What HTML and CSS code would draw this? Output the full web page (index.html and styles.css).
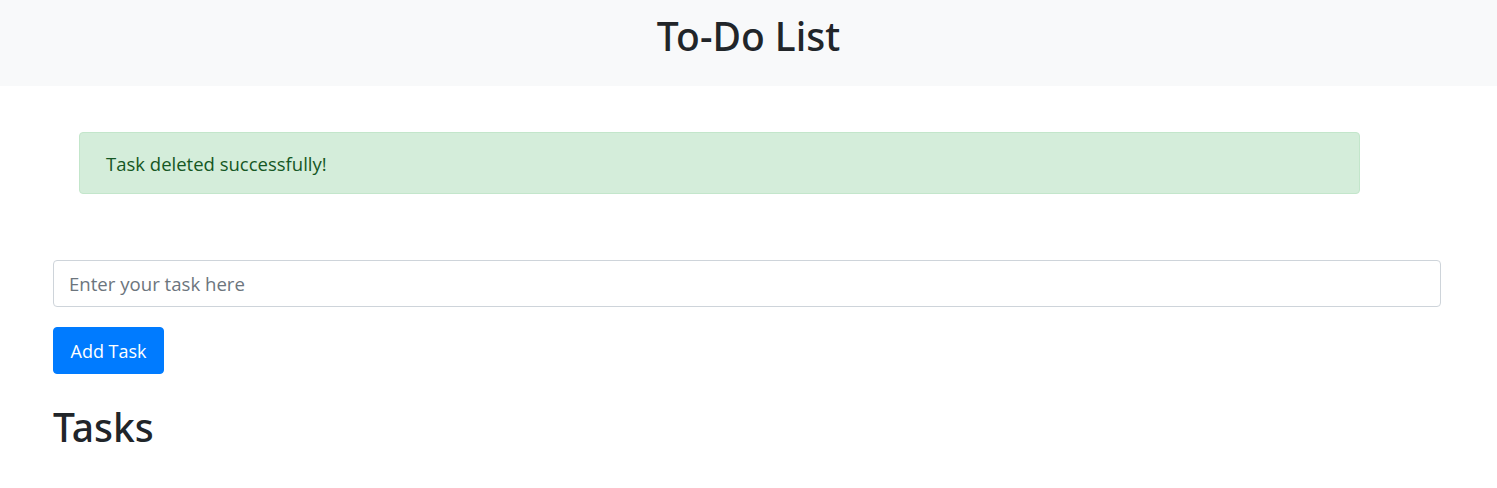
FILE: index.html
```html
<!DOCTYPE html>
<html lang="en">
<head>
<meta charset="utf-8">
<title>To-Do List</title>
<link rel="stylesheet" href="styles.css">
</head>
<body>
<header class="header">
  <h1 class="title">To-Do List</h1>
</header>
<main class="content">
  <div class="alert">Task deleted successfully!</div>
  <form class="task-form">
    <input class="task-input" type="text" placeholder="Enter your task here">
    <button class="btn-add" type="button">Add Task</button>
  </form>
  <h2 class="section-title">Tasks</h2>
</main>
</body>
</html>
```
FILE: styles.css
```css
* { box-sizing: border-box; }
body {
  margin: 0;
  font-family: "Open Sans", "Noto Sans", sans-serif;
  color: #212529;
  background: #fff;
}
.header {
  background: #f8f9fa;
  height: 86px;
  display: flex;
  align-items: center;
  justify-content: center;
  padding-bottom: 14px;
}
.title {
  margin: 0;
  font-family: "Noto Sans", "Open Sans", sans-serif;
  font-size: 39px;
  font-weight: 500;
  line-height: 1.2;
}
.content {
  padding: 46px 56px 0 53px;
}
.alert {
  margin: 0 81px 0 26px;
  height: 62px;
  display: flex;
  align-items: center;
  padding: 0 26px;
  background: #d4edda;
  border: 1px solid #c3e6cb;
  border-radius: 4px;
  color: #155724;
  font-size: 18.5px;
}
.task-form {
  margin-top: 66px;
  display: flex;
  flex-direction: column;
  align-items: flex-start;
  gap: 20px;
}
.task-input {
  width: 100%;
  height: 47px;
  padding: 0 15px;
  border: 1px solid #ced4da;
  border-radius: 4px;
  font-family: inherit;
  font-size: 18.6px;
  color: #495057;
}
.task-input::placeholder { color: #6c757d; }
.btn-add {
  height: 47px;
  padding: 0 16.5px;
  background: #007bff;
  border: 1px solid #007bff;
  border-radius: 4px;
  color: #fff;
  font-family: inherit;
  font-size: 18px;
}
.section-title {
  margin: 30px 0 0;
  font-family: "Noto Sans", "Open Sans", sans-serif;
  font-size: 39px;
  font-weight: 500;
  line-height: 1.2;
}
```
